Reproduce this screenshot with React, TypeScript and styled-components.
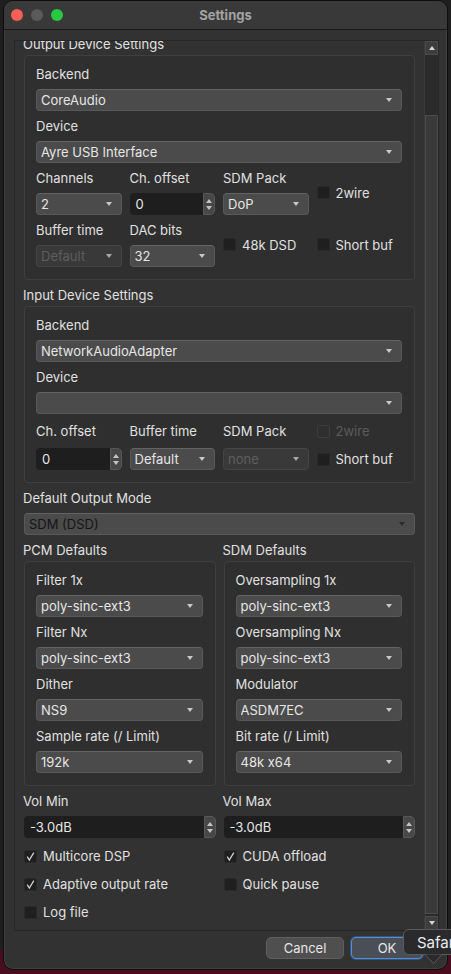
import React from "react";
import styled, { createGlobalStyle } from "styled-components";

const GlobalStyle = createGlobalStyle`
  html, body {
    margin: 0;
    padding: 0;
  }
  body {
    background: #1e1e1e;
    font-family: Inter, "Liberation Sans", sans-serif;
    font-size: 13px;
    color: #e0e0e0;
    -webkit-font-smoothing: antialiased;
  }
  * {
    box-sizing: border-box;
  }
`;

const Desktop = styled.div`
  position: relative;
  width: 451px;
  height: 974px;
  overflow: hidden;
  padding: 0 3px;
  background: linear-gradient(to bottom, #1f1f1f 0, #1f1f1f 950px, #4a0d1f 950px);
`;

const Window = styled.div`
  width: 445px;
  height: 970px;
  display: flex;
  flex-direction: column;
  background: #323232;
  border: 1px solid #0d0d0d;
  border-radius: 10px;
  box-shadow: inset 0 0 0 1px rgba(255, 255, 255, 0.07);
  overflow: hidden;
`;

const TitleBar = styled.div`
  height: 29px;
  flex: none;
  display: grid;
  grid-template-columns: 1fr auto 1fr;
  align-items: center;
  padding-left: 7px;
  background: #393939;
  border-bottom: 1px solid #1a1a1a;
`;

const Lights = styled.div`
  display: flex;
  gap: 8px;
`;

const Light = styled.span<{ $color: string }>`
  width: 12px;
  height: 12px;
  border-radius: 50%;
  background: ${(p) => p.$color};
`;

const Title = styled.div`
  font-weight: 700;
  font-size: 13px;
  color: #a3a3a3;
  margin-left: -7px;
`;

const Body = styled.div`
  flex: 1;
  display: flex;
  flex-direction: column;
  padding: 10px 8px 0 10px;
`;

const ScrollArea = styled.div`
  height: 891px;
  flex: none;
  display: flex;
  border: 1px solid #262626;
`;

const Viewport = styled.div`
  flex: 1;
  overflow: hidden;
`;

const Content = styled.div<{ $offset: number }>`
  margin-top: ${(p) => -p.$offset}px;
  padding: 0 9px;
  display: flex;
  flex-direction: column;
  gap: 7px;
`;

const Section = styled.div`
  display: flex;
  flex-direction: column;
  gap: 3px;
`;

const SectionTitle = styled.div`
  line-height: 16px;
  height: 16px;
  margin-left: -1px;
  white-space: nowrap;
`;

const GroupBox = styled.div`
  border: 1px solid #3f3f3f;
  border-radius: 4px;
  background: rgba(0, 0, 0, 0.05);
  padding: 10px 12px 12px 11px;
  display: flex;
  flex-direction: column;
  gap: 7px;
`;

const Label = styled.div<{ $disabled?: boolean }>`
  line-height: 16px;
  height: 16px;
  white-space: nowrap;
  color: ${(p) => (p.$disabled ? "#5c5c5c" : "#e0e0e0")};
`;

const Grid = styled.div<{ $cols: number }>`
  display: grid;
  grid-template-columns: repeat(${(p) => p.$cols}, minmax(0, 1fr));
  align-items: center;
  column-gap: 8px;
  row-gap: 7px;
`;

const CheckGrid = styled.div`
  display: grid;
  grid-template-columns: 1fr 1fr;
  column-gap: 8px;
  row-gap: 8px;
  margin-top: 1px;
`;

type ComboTone = "normal" | "disabled" | "dark";

const ComboBox = styled.div<{ $tone: ComboTone }>`
  height: 22px;
  display: flex;
  align-items: center;
  padding: 0 9px 0 4px;
  border-radius: 4px;
  border: 1px solid ${(p) => (p.$tone === "disabled" ? "#444" : "#595959")};
  border-top-color: ${(p) => (p.$tone === "disabled" ? "#474747" : "#636363")};
  background: ${(p) => (p.$tone === "disabled" ? "#393939" : "#4b4b4b")};
  color: ${(p) =>
    p.$tone === "disabled" ? "#5e5e5e" : p.$tone === "dark" ? "#151515" : "#e6e6e6"};
  white-space: nowrap;
`;

const ComboText = styled.span`
  flex: 1;
  overflow: hidden;
`;

const DownArrow = styled.span<{ $color: string }>`
  width: 0;
  height: 0;
  border-left: 3.5px solid transparent;
  border-right: 3.5px solid transparent;
  border-top: 4px solid ${(p) => p.$color};
`;

const UpArrow = styled.span<{ $color: string }>`
  width: 0;
  height: 0;
  border-left: 3.5px solid transparent;
  border-right: 3.5px solid transparent;
  border-bottom: 4px solid ${(p) => p.$color};
`;

const SpinBox = styled.div`
  height: 22px;
  display: flex;
  border-radius: 4px;
  overflow: hidden;
  background: #1e1e1e;
`;

const SpinValue = styled.div`
  flex: 1;
  display: flex;
  align-items: center;
  padding-left: 6px;
  color: #e6e6e6;
`;

const SpinButtons = styled.div`
  width: 12px;
  display: flex;
  flex-direction: column;
  align-items: center;
  justify-content: center;
  gap: 3px;
  background: #474747;
  border: 1px solid #585858;
  border-radius: 0 4px 4px 0;
`;

const CheckRow = styled.div<{ $span?: number }>`
  height: 20px;
  display: flex;
  align-items: center;
  gap: 6px;
  white-space: nowrap;
  grid-row: span ${(p) => p.$span ?? 1};
  align-self: center;
`;

const Box = styled.span<{ $disabled?: boolean }>`
  width: 13px;
  height: 13px;
  flex: none;
  display: flex;
  align-items: center;
  justify-content: center;
  border-radius: 2px;
  background: ${(p) => (p.$disabled ? "#2f2f2f" : "#1f1f1f")};
  border: 1px solid ${(p) => (p.$disabled ? "#3c3c3c" : "#292929")};
`;

const CheckText = styled.span<{ $disabled?: boolean }>`
  color: ${(p) => (p.$disabled ? "#5c5c5c" : "#e0e0e0")};
`;

const ScrollBar = styled.div`
  width: 14px;
  flex: none;
  display: flex;
  flex-direction: column;
  background: #2b2b2b;
  border-left: 1px solid #3a3a3a;
`;

const ScrollButton = styled.div`
  height: 14px;
  flex: none;
  display: flex;
  align-items: center;
  justify-content: center;
  background: #3d3d3d;
  border: 1px solid #4b4b4b;
`;

const Track = styled.div<{ $top: number }>`
  flex: 1;
  display: flex;
  flex-direction: column;
  padding: ${(p) => p.$top}px 0 2px;
`;

const Thumb = styled.div`
  flex: 1;
  background: #3a3a3a;
  border: 1px solid #4b4b4b;
`;

const Footer = styled.div`
  display: flex;
  justify-content: flex-end;
  gap: 7px;
  padding: 6px 16px 0 0;
`;

const Button = styled.div<{ $primary?: boolean }>`
  height: 22px;
  width: ${(p) => (p.$primary ? 72 : 78)}px;
  display: flex;
  align-items: center;
  justify-content: center;
  border-radius: 5px;
  color: #e6e6e6;
  background: ${(p) => (p.$primary ? "#4a4f57" : "#4f4f4f")};
  border: 1px solid ${(p) => (p.$primary ? "#4f8fe3" : "#5f5f5f")};
  box-shadow: ${(p) => (p.$primary ? "0 0 0 1px rgba(79,143,227,0.35)" : "none")};
`;

const Tooltip = styled.div`
  position: absolute;
  left: 403px;
  top: 929px;
  width: 64px;
  height: 26px;
  display: flex;
  align-items: center;
  padding-left: 13px;
  font-size: 15px;
  color: #ececec;
  background: #2a2a2c;
  border: 1px solid #5a5a5a;
  border-radius: 6px;
`;

const TooltipTail = styled.svg`
  position: absolute;
  left: 425px;
  top: 954px;
`;

function Combo({ value, tone = "normal" }: { value: string; tone?: ComboTone }) {
  const arrow = tone === "dark" ? "#2b2b2b" : tone === "disabled" ? "#a8a8a8" : "#c9c9c9";
  return (
    <ComboBox $tone={tone}>
      <ComboText>{value}</ComboText>
      <DownArrow $color={arrow} />
    </ComboBox>
  );
}

function Spin({ value }: { value: string }) {
  return (
    <SpinBox>
      <SpinValue>{value}</SpinValue>
      <SpinButtons>
        <UpArrow $color="#c4c4c4" />
        <DownArrow $color="#c4c4c4" />
      </SpinButtons>
    </SpinBox>
  );
}

function Check({
  label,
  checked,
  disabled,
  span,
}: {
  label: string;
  checked?: boolean;
  disabled?: boolean;
  span?: number;
}) {
  return (
    <CheckRow $span={span}>
      <Box $disabled={disabled}>
        {checked && (
          <svg width="11" height="11" viewBox="0 0 11 11">
            <polyline
              points="2.2,5.6 4.3,9 8.8,1.6"
              fill="none"
              stroke="#d8d8d8"
              strokeWidth="1.2"
            />
          </svg>
        )}
      </Box>
      <CheckText $disabled={disabled}>{label}</CheckText>
    </CheckRow>
  );
}

export default function App() {
  return (
    <Desktop>
      <GlobalStyle />
      <Window>
        <TitleBar>
          <Lights>
            <Light $color="#fe5f57" />
            <Light $color="#5a5a5c" />
            <Light $color="#28c840" />
          </Lights>
          <Title>Settings</Title>
          <span />
        </TitleBar>
        <Body>
          <ScrollArea>
            <Viewport>
              <Content $offset={5}>
                <Section>
                  <SectionTitle>Output Device Settings</SectionTitle>
                  <GroupBox>
                    <Label>Backend</Label>
                    <Combo value="CoreAudio" />
                    <Label>Device</Label>
                    <Combo value="Ayre USB Interface" />
                    <Grid $cols={4}>
                      <Label>Channels</Label>
                      <Label>Ch. offset</Label>
                      <Label>SDM Pack</Label>
                      <Check label="2wire" span={2} />
                      <Combo value="2" />
                      <Spin value="0" />
                      <Combo value="DoP" />
                      <Label>Buffer time</Label>
                      <Label>DAC bits</Label>
                      <Check label="48k DSD" span={2} />
                      <Check label="Short buf" span={2} />
                      <Combo value="Default" tone="disabled" />
                      <Combo value="32" />
                    </Grid>
                  </GroupBox>
                </Section>

                <Section>
                  <SectionTitle>Input Device Settings</SectionTitle>
                  <GroupBox>
                    <Label>Backend</Label>
                    <Combo value="NetworkAudioAdapter" />
                    <Label>Device</Label>
                    <Combo value="" />
                    <Grid $cols={4}>
                      <Label>Ch. offset</Label>
                      <Label>Buffer time</Label>
                      <Label>SDM Pack</Label>
                      <Check label="2wire" disabled />
                      <Spin value="0" />
                      <Combo value="Default" />
                      <Combo value="none" tone="disabled" />
                      <Check label="Short buf" />
                    </Grid>
                  </GroupBox>
                </Section>

                <SectionTitle>Default Output Mode</SectionTitle>
                <Combo value="SDM (DSD)" tone="dark" />

                <Grid $cols={2}>
                  <Section>
                    <SectionTitle>PCM Defaults</SectionTitle>
                    <GroupBox>
                      <Label>Filter 1x</Label>
                      <Combo value="poly-sinc-ext3" />
                      <Label>Filter Nx</Label>
                      <Combo value="poly-sinc-ext3" />
                      <Label>Dither</Label>
                      <Combo value="NS9" />
                      <Label>Sample rate (/ Limit)</Label>
                      <Combo value="192k" />
                    </GroupBox>
                  </Section>
                  <Section>
                    <SectionTitle>SDM Defaults</SectionTitle>
                    <GroupBox>
                      <Label>Oversampling 1x</Label>
                      <Combo value="poly-sinc-ext3" />
                      <Label>Oversampling Nx</Label>
                      <Combo value="poly-sinc-ext3" />
                      <Label>Modulator</Label>
                      <Combo value="ASDM7EC" />
                      <Label>Bit rate (/ Limit)</Label>
                      <Combo value="48k x64" />
                    </GroupBox>
                  </Section>
                </Grid>

                <Grid $cols={2}>
                  <SectionTitle>Vol Min</SectionTitle>
                  <SectionTitle>Vol Max</SectionTitle>
                  <Spin value="-3.0dB" />
                  <Spin value="-3.0dB" />
                </Grid>

                <CheckGrid>
                  <Check label="Multicore DSP" checked />
                  <Check label="CUDA offload" checked />
                  <Check label="Adaptive output rate" checked />
                  <Check label="Quick pause" />
                  <Check label="Log file" />
                </CheckGrid>
              </Content>
            </Viewport>
            <ScrollBar>
              <ScrollButton>
                <UpArrow $color="#d6d6d6" />
              </ScrollButton>
              <Track $top={60}>
                <Thumb />
              </Track>
              <ScrollButton>
                <DownArrow $color="#d6d6d6" />
              </ScrollButton>
            </ScrollBar>
          </ScrollArea>
          <Footer>
            <Button>Cancel</Button>
            <Button $primary>OK</Button>
          </Footer>
        </Body>
      </Window>
      <Tooltip>Safari</Tooltip>
      <TooltipTail width="17" height="11" viewBox="0 0 17 11">
        <path d="M0 0.5 L8.5 9.5 L17 0.5" fill="#2a2a2c" stroke="#5a5a5a" strokeWidth="1" />
      </TooltipTail>
    </Desktop>
  );
}
